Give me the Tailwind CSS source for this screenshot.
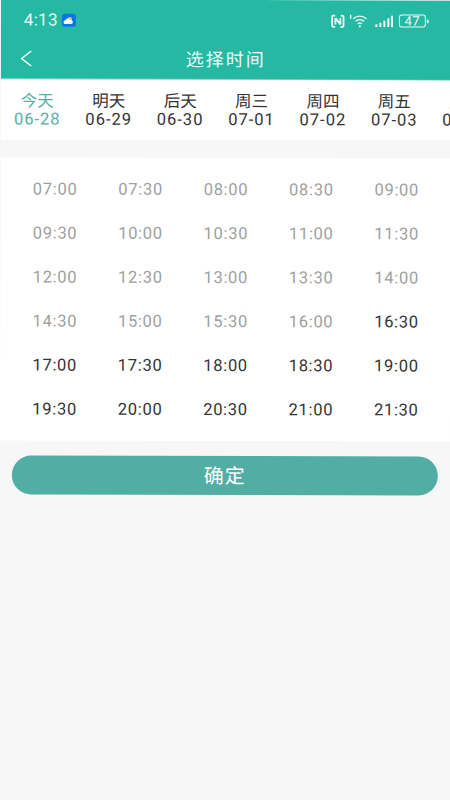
<!DOCTYPE html>
<html lang="zh-CN">
<head>
    <meta charset="UTF-8">
    <meta name="viewport" content="width=device-width, initial-scale=1.0">
    <title>选择时间</title>
    <script src="https://cdn.jsdelivr.net/npm/@tailwindcss/browser@4"></script>
</head>
<body class="bg-[#f7f7f7] font-['Roboto','Noto_Sans_CJK_SC',sans-serif] overflow-hidden">
    <div class="w-[450px] h-[800px] flex flex-col overflow-hidden rotate-[0.13deg]">
        <!-- 顶部 -->
        <header class="bg-[#25b9a3] h-[80px] text-white flex flex-col">
            <div class="h-[40px] flex items-center pl-[23px] pr-[22px] pt-[1px]">
                <span class="text-[17px] leading-none tracking-[0.3px] text-[#eefaf7]">4:13</span>
                <span class="ml-[4px] w-[14px] h-[13px] rounded-[3px] bg-[#0b74e8] flex items-center justify-center">
                    <svg width="11" height="8" viewBox="0 0 11 8"><circle cx="7" cy="2.6" r="2.2" fill="#f3c04f"/><path d="M2.5 7.4a1.9 1.9 0 0 1 0-3.8 2.6 2.6 0 0 1 4.8-.2 2 2 0 0 1 1.2 4z" fill="#fff"/></svg>
                </span>
                <span class="ml-auto flex items-center">
                    <!-- NFC -->
                    <svg width="14" height="14" viewBox="0 0 13 13" fill="none" stroke="#eefaf7" stroke-width="1.7"><path d="M4 1.2H2.6A1.4 1.4 0 0 0 1.2 2.6v7.8a1.4 1.4 0 0 0 1.4 1.4H4M9 1.2h1.4a1.4 1.4 0 0 1 1.4 1.4v7.8a1.4 1.4 0 0 1-1.4 1.4H9"/><path d="M4.2 3.4v6.2M4.2 3.6l4.6 5.8M8.8 3.4v6.2"/></svg>
                    <!-- wifi -->
                    <svg class="ml-[4px]" width="20" height="14" viewBox="0 0 19 14" fill="none" stroke="#eefaf7" stroke-width="1.4"><path d="M1.3 1v3" stroke-linecap="round"/><path d="M4 4.4c3.6-3.4 9-3.4 13 0M6.2 7c2.6-2.2 6.2-2.2 8.6 0M8.4 9.6c1.2-1 3-1 4.2 0"/><circle cx="10.5" cy="12" r="1.1" fill="#eefaf7" stroke="none"/></svg>
                    <!-- 信号 -->
                    <svg class="ml-[6px]" width="19" height="12" viewBox="0 0 18 12" fill="#eefaf7"><rect x="0" y="9" width="2" height="3"/><rect x="4" y="7.5" width="2" height="4.5"/><rect x="8" y="5.5" width="2" height="6.5"/><rect x="12" y="3" width="2" height="9"/><rect x="15.6" y="0" width="2" height="12"/></svg>
                    <!-- 电池 -->
                    <span class="ml-[5px] w-[27px] h-[13px] rounded-[3px] border border-[#eefaf7] flex items-center justify-center text-[13px] leading-none tracking-[0.5px] text-[#eefaf7]">47</span>
                    <span class="ml-[1px] w-[2px] h-[4px] rounded-r-sm bg-[#eefaf7]"></span>
                </span>
            </div>
            <div class="h-[39px] relative flex items-center justify-center">
                <svg class="absolute left-[19px] top-[10px]" width="13" height="18" viewBox="0 0 13 18" fill="none" stroke="#fff" stroke-width="1.4"><path d="M11.5 1.5 1.8 9l9.7 7.5"/></svg>
                <span class="text-[18px] tracking-[2px] text-[#eafaf6]">选择时间</span>
            </div>
            <div class="h-[1px] bg-gradient-to-r from-[#c8f3ee] to-[#3dbfa9]"></div>
        </header>

        <!-- 日期 -->
        <div class="bg-white h-[60px] flex pl-[1px] pt-[13px] shrink-0 text-[16.5px] leading-[18px]">
            <div class="w-[71.4px] shrink-0 text-center text-[#5aaea5]"><p>今天</p><p class="tracking-[1px]">06-28</p></div>
            <div class="w-[71.4px] shrink-0 text-center text-[#333333]"><p>明天</p><p class="tracking-[1px]">06-29</p></div>
            <div class="w-[71.4px] shrink-0 text-center text-[#333333]"><p>后天</p><p class="tracking-[1px]">06-30</p></div>
            <div class="w-[71.4px] shrink-0 text-center text-[#333333]"><p>周三</p><p class="tracking-[1px]">07-01</p></div>
            <div class="w-[71.4px] shrink-0 text-center text-[#333333]"><p>周四</p><p class="tracking-[1px]">07-02</p></div>
            <div class="w-[71.4px] shrink-0 text-center text-[#333333]"><p>周五</p><p class="tracking-[1px]">07-03</p></div>
            <div class="w-[71.4px] shrink-0 text-center text-[#333333]"><p>周六</p><p class="tracking-[1px]">07-04</p></div>
        </div>

        <!-- 时间 -->
        <div class="mt-[18px] bg-white h-[283px] shrink-0 pl-[12px] pr-[11px] pt-[10px] grid grid-cols-5 auto-rows-[44px] text-center text-[16.5px] leading-[44px] tracking-[0.7px] text-[#a0a0a0]">
            <span>07:00</span><span>07:30</span><span>08:00</span><span>08:30</span><span>09:00</span>
            <span>09:30</span><span>10:00</span><span>10:30</span><span>11:00</span><span>11:30</span>
            <span>12:00</span><span>12:30</span><span>13:00</span><span>13:30</span><span>14:00</span>
            <span>14:30</span><span>15:00</span><span>15:30</span><span>16:00</span><span class="text-[#333333]">16:30</span>
            <span class="text-[#333333]">17:00</span><span class="text-[#333333]">17:30</span><span class="text-[#333333]">18:00</span><span class="text-[#333333]">18:30</span><span class="text-[#333333]">19:00</span>
            <span class="text-[#333333]">19:30</span><span class="text-[#333333]">20:00</span><span class="text-[#333333]">20:30</span><span class="text-[#333333]">21:00</span><span class="text-[#333333]">21:30</span>
        </div>

        <button class="mt-[15px] mx-[12px] h-[39px] shrink-0 rounded-full bg-[#50aea5] text-white text-[20px] tracking-[1px]">确定</button>
    </div>
</body>
</html>
